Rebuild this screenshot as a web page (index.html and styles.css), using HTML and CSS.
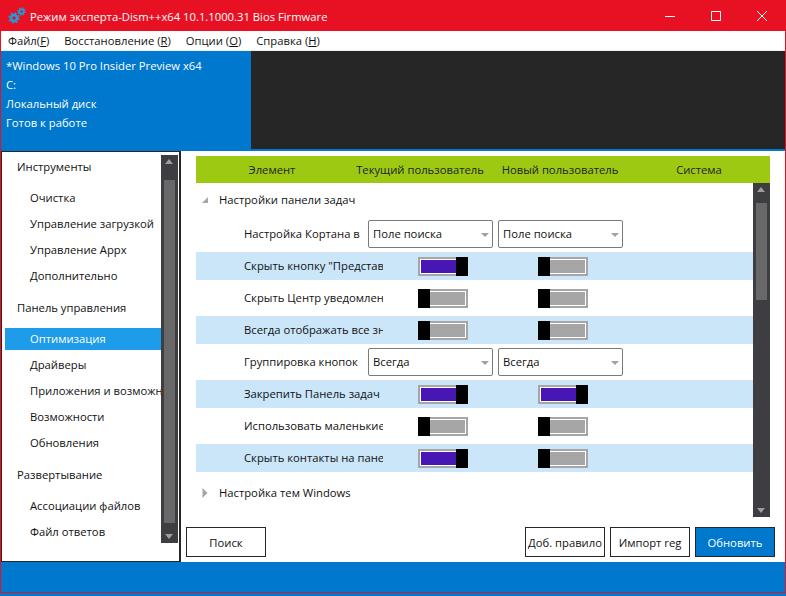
FILE: index.html
```html
<!DOCTYPE html>
<html lang="ru">
<head>
<meta charset="utf-8">
<title>Dism++</title>
<link rel="stylesheet" href="styles.css">
</head>
<body>
<div class="window">
  <header class="titlebar">
    <svg class="logo" width="22" height="20" viewBox="0 0 22 20">
      <g fill="none" stroke="#1a9fe0">
        <circle cx="6" cy="12" r="3" stroke-width="2.400"/>
        <circle cx="6" cy="12" r="4.800" stroke-width="1.600" stroke-dasharray="1.900 1.870"/>
        <circle cx="13.500" cy="5.500" r="2.200" stroke-width="1.800"/>
        <circle cx="13.500" cy="5.500" r="3.500" stroke-width="1.400" stroke-dasharray="1.500 1.250"/>
      </g>
    </svg>
    <span class="title">Режим эксперта-Dism++x64 10.1.1000.31 Bios Firmware</span>
    <div class="controls">
      <svg width="46" height="30" viewBox="0 0 46 30"><path d="M18 15.500h10" stroke="#fff"/></svg>
      <svg width="46" height="30" viewBox="0 0 46 30"><path d="M18.500 10.500h9v9h-9z" fill="none" stroke="#fff"/></svg>
      <svg width="46" height="30" viewBox="0 0 46 30"><path d="M18 10l10 10M28 10l-10 10" stroke="#fff"/></svg>
    </div>
  </header>
  <nav class="menu">
    <span>Файл(<u>F</u>)</span>
    <span>Восстановление (<u>R</u>)</span>
    <span>Опции (<u>O</u>)</span>
    <span>Справка (<u>H</u>)</span>
  </nav>
  <section class="top">
    <div class="info">
      <div>*Windows 10 Pro Insider Preview x64</div>
      <div>C:</div>
      <div>Локальный диск</div>
      <div>Готов к работе</div>
    </div>
    <div class="dark"></div>
  </section>
  <main class="main">
    <aside class="sidebar">
      <div class="side-list">
        <div class="group">
          <div class="group-title">Инструменты</div>
          <div class="item">Очистка</div>
          <div class="item">Управление загрузкой</div>
          <div class="item">Управление Appx</div>
          <div class="item">Дополнительно</div>
        </div>
        <div class="group">
          <div class="group-title">Панель управления</div>
          <div class="item selected">Оптимизация</div>
          <div class="item">Драйверы</div>
          <div class="item">Приложения и возможности</div>
          <div class="item">Возможности</div>
          <div class="item">Обновления</div>
        </div>
        <div class="group">
          <div class="group-title">Развертывание</div>
          <div class="item">Ассоциации файлов</div>
          <div class="item">Файл ответов</div>
        </div>
      </div>
      <div class="scrollbar side-scroll">
        <div class="arrow up"></div>
        <div class="thumb thumb-side"></div>
        <div class="arrow down"></div>
      </div>
    </aside>
    <section class="panel">
      <div class="table">
        <div class="thead">
          <span>Элемент</span>
          <span>Текущий пользователь</span>
          <span>Новый пользователь</span>
          <span>Система</span>
        </div>
        <div class="tbody">
          <div class="tree">
            <div class="tree-head open">
              <svg width="8" height="8" viewBox="0 0 8 8"><path d="M7 1v6H1z" fill="#a6a6a6"/></svg>
              <span>Настройки панели задач</span>
            </div>
            <div class="row">
              <span class="label short">Настройка Кортана в</span>
              <div class="combo"><span>Поле поиска</span><i class="caret"></i></div>
              <div class="combo"><span>Поле поиска</span><i class="caret"></i></div>
            </div>
            <div class="row alt">
              <span class="label">Скрыть кнопку "Представление задач"</span>
              <div class="toggle first on"><div class="track"><div class="fill"></div></div><div class="knob"></div></div>
              <div class="toggle off"><div class="knob"></div><div class="track"><div class="fill"></div></div></div>
            </div>
            <div class="row">
              <span class="label">Скрыть Центр уведомлений</span>
              <div class="toggle first off"><div class="knob"></div><div class="track"><div class="fill"></div></div></div>
              <div class="toggle off"><div class="knob"></div><div class="track"><div class="fill"></div></div></div>
            </div>
            <div class="row alt">
              <span class="label">Всегда отображать все значки</span>
              <div class="toggle first off"><div class="knob"></div><div class="track"><div class="fill"></div></div></div>
              <div class="toggle off"><div class="knob"></div><div class="track"><div class="fill"></div></div></div>
            </div>
            <div class="row">
              <span class="label short">Группировка кнопок</span>
              <div class="combo"><span>Всегда</span><i class="caret"></i></div>
              <div class="combo"><span>Всегда</span><i class="caret"></i></div>
            </div>
            <div class="row alt">
              <span class="label">Закрепить Панель задач</span>
              <div class="toggle first on"><div class="track"><div class="fill"></div></div><div class="knob"></div></div>
              <div class="toggle on"><div class="track"><div class="fill"></div></div><div class="knob"></div></div>
            </div>
            <div class="row">
              <span class="label">Использовать маленькие кнопки</span>
              <div class="toggle first off"><div class="knob"></div><div class="track"><div class="fill"></div></div></div>
              <div class="toggle off"><div class="knob"></div><div class="track"><div class="fill"></div></div></div>
            </div>
            <div class="row alt">
              <span class="label">Скрыть контакты на панели задач</span>
              <div class="toggle first on"><div class="track"><div class="fill"></div></div><div class="knob"></div></div>
              <div class="toggle off"><div class="knob"></div><div class="track"><div class="fill"></div></div></div>
            </div>
            <div class="tree-head closed">
              <svg width="8" height="12" viewBox="0 0 8 12"><path d="M1.500 1v10l5-5z" fill="#a6a6a6"/></svg>
              <span>Настройка тем Windows</span>
            </div>
          </div>
          <div class="scrollbar">
            <div class="arrow up"></div>
            <div class="thumb thumb-main"></div>
            <div class="spacer"></div>
            <div class="arrow down"></div>
          </div>
        </div>
      </div>
      <div class="actions">
        <button class="btn">Поиск</button>
        <div class="actions-right">
          <button class="btn tight">Доб. правило</button>
          <button class="btn">Импорт reg</button>
          <button class="btn primary">Обновить</button>
        </div>
      </div>
    </section>
  </main>
  <footer class="footer"></footer>
</div>
</body>
</html>
```
FILE: styles.css
```css
* { box-sizing: border-box; }
html, body { margin: 0; padding: 0; }
body {
  width: 786px;
  height: 596px;
  background: #0078cd;
  font-family: "Open Sans", "Noto Sans", sans-serif;
  font-size: 11.25px;
  color: #111;
  overflow: hidden;
}
.window {
  width: 786px;
  height: 593px;
  border: 1px solid #e81123;
  display: flex;
  flex-direction: column;
  background: #fff;
}
.titlebar {
  height: 30px;
  flex: none;
  background: #e81123;
  color: #fff;
  display: flex;
  align-items: center;
  padding-left: 7px;
}
.logo { flex: none; }
.title { margin-left: 0; }
.controls { margin-left: auto; display: flex; }
.controls svg { display: block; }
.menu {
  height: 20px;
  flex: none;
  display: flex;
  align-items: center;
  padding-left: 7px;
  gap: 15px;
  background: #fff;
  border-bottom: 1px solid #f0f0f0;
}
.top {
  height: 100px;
  flex: none;
  display: flex;
  background: #0078cd;
}
.info {
  width: 250px;
  flex: none;
  padding: 5px 0 0 5px;
  color: #fff;
}
.info div { height: 19px; line-height: 19px; }
.dark { flex: 1; height: 98px; background: #262626; }
.main { flex: none; height: 411px; display: flex; }
.sidebar {
  width: 180px;
  flex: none;
  border: 1px solid #262626;
  border-right-width: 2px;
  padding: 3px 0 0 3px;
  display: flex;
  background: #fff;
}
.side-list { width: 156px; flex: none; padding-top: 1px; overflow: hidden; }
.group { margin-bottom: 10px; }
.group-title { height: 22px; line-height: 22px; padding-left: 12px; margin-bottom: 9px; }
.item {
  height: 22px;
  line-height: 22px;
  padding-left: 25px;
  margin-bottom: 4px;
  white-space: nowrap;
  overflow: hidden;
}
.item.selected { background: #1e9be9; color: #fff; }
.scrollbar {
  width: 17px;
  flex: none;
  background: #3e3e42;
  display: flex;
  flex-direction: column;
  align-items: center;
}
.side-scroll { height: 388px; }
.arrow { width: 17px; height: 20px; flex: none; position: relative; }
.arrow::after {
  content: "";
  position: absolute;
  left: 4px;
  border-left: 4.500px solid transparent;
  border-right: 4.500px solid transparent;
}
.arrow.up::after { top: 4px; border-bottom: 5px solid #9e9e9e; }
.arrow.down::after { bottom: 4px; border-top: 5px solid #9e9e9e; }
.thumb { width: 11px; background: #686868; }
.thumb-side { flex: 1; margin-top: 5px; }
.thumb-main { height: 97px; flex: none; }
.spacer { flex: 1; }
.panel {
  flex: 1;
  min-width: 0;
  padding: 5px 10px 5px 5px;
  display: flex;
  flex-direction: column;
  background: #fff;
}
.table { margin: 0 5px 0 10px; }
.thead {
  height: 27px;
  background: #9dc913;
  display: grid;
  grid-template-columns: 152px 144px 136px 142px;
  align-items: center;
  text-align: center;
  color: #222;
}
.tbody { height: 334px; display: flex; }
.tree { flex: 1; min-width: 0; padding-top: 3px; }
.tree-head {
  height: 28px;
  display: flex;
  align-items: center;
  padding-left: 5px;
}
.tree-head svg { flex: none; width: 8px; }
.tree-head span { margin-left: 10px; padding-bottom: 2px; }
.tree-head.open { margin-bottom: 6px; }
.tree-head.closed { margin-top: 7px; }
.row {
  height: 28px;
  margin-bottom: 4px;
  display: flex;
  align-items: center;
  padding-left: 48px;
}
.row.alt { background: #cbe6f9; }
.label { width: 139px; flex: none; white-space: nowrap; overflow: hidden; padding-bottom: 2px; }
.label.short { width: 124px; }
.combo {
  width: 125px;
  height: 28px;
  flex: none;
  margin-right: 5px;
  border: 1px solid #7a7a7a;
  border-radius: 2px;
  background: #fff;
  display: flex;
  align-items: center;
  justify-content: space-between;
  padding: 0 3px 0 4px;
}
.combo span { padding-bottom: 2px; }
.caret {
  border-left: 4px solid transparent;
  border-right: 4px solid transparent;
  border-top: 4px solid #a0a0a0;
  margin-top: 1px;
}
.toggle { width: 50px; height: 19px; flex: none; display: flex; }
.toggle.first { margin-left: 35px; margin-right: 70px; }
.knob { width: 12px; flex: none; background: #000; }
.track { flex: 1; border: 2px solid #a6a6a6; }
.fill { height: 100%; border: 1px solid #fff; background: #a6a6a6; }
.toggle.on .track { border-right: 0; }
.toggle.on .fill { border-right: 0; background: #4617b4; }
.toggle.off .track { border-left: 0; }
.toggle.off .fill { border-left: 0; }
.actions { margin-top: 10px; display: flex; justify-content: space-between; }
.actions-right { display: flex; gap: 5px; }
.btn {
  width: 80px;
  height: 30px;
  border: 1px solid #262626;
  background: #fff;
  color: #111;
  font: inherit;
  padding: 0;
}
.btn.tight { white-space: nowrap; }
.btn.primary { background: #0078cd; color: #fff; }
.footer { flex: none; height: 30px; background: #0078cd; }
```
